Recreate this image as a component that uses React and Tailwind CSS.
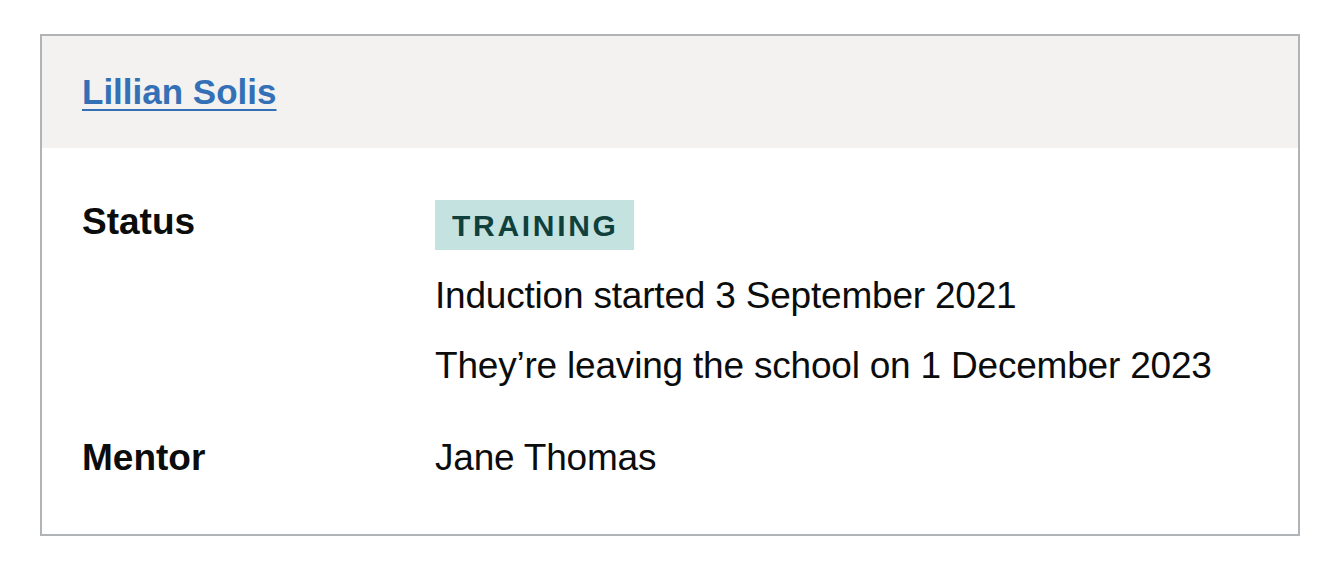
import React from 'react';

const rows = [
  {
    key: 'Status',
    tag: 'Training',
    lines: ['Induction started 3 September 2021', 'They’re leaving the school on 1 December 2023'],
  },
  { key: 'Mentor', lines: ['Jane Thomas'] },
];

export default function App() {
  return (
    <div className="min-h-screen bg-white pt-[34px] pl-[40px] font-['Liberation_Sans',Arial,sans-serif] text-[#0b0c0c]">
      <div className="w-[1260px] border-2 border-[#b1b4b6]">
        {/* card header */}
        <div className="bg-[#f3f2f1] px-[40px] py-[31px]">
          <a
            href="#"
            className="text-[35px] leading-[50px] font-bold text-[#3470b6] underline decoration-2 underline-offset-[5px]"
          >
            Lillian Solis
          </a>
        </div>

        {/* summary list */}
        <div className="px-[40px] pt-[49px] pb-[51px]">
          {rows.map((row, i) => (
            <div key={row.key} className={`flex ${i > 0 ? 'mt-[42px]' : ''}`}>
              <div className="w-[353px] shrink-0 text-[37px] leading-[50px] font-bold">{row.key}</div>
              <div className="flex flex-col items-start">
                {row.tag && (
                  <span className="mt-[3px] mb-[21px] bg-[#c4e2e0] pl-[17px] pr-[15px] pt-[11px] pb-[9px] text-[30px] leading-[30px] font-bold uppercase tracking-[2.7px] text-[#10403c]">
                    {row.tag}
                  </span>
                )}
                {row.lines.map((line, j) => (
                  <p key={j} className={`text-[37px] leading-[50px] tracking-[-0.2px] ${j > 0 ? 'mt-[20px]' : ''}`}>
                    {line}
                  </p>
                ))}
              </div>
            </div>
          ))}
        </div>
      </div>
    </div>
  );
}
